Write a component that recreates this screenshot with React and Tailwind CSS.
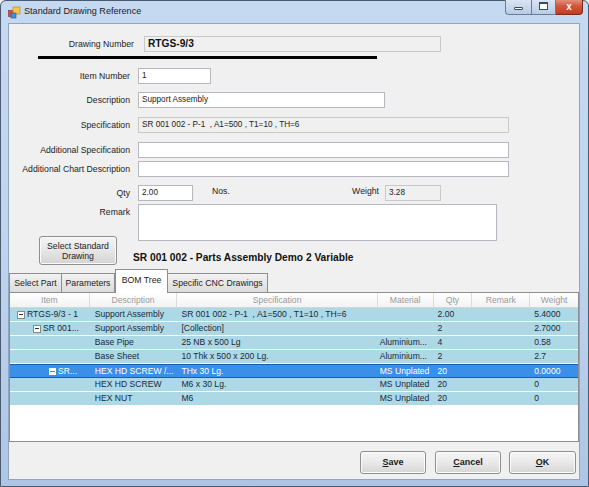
import React from "react";

const rows = [
  { lvl: 0, box: true, item: "RTGS-9/3 - 1", desc: "Support Assembly", spec: "SR 001 002 - P-1  , A1=500 , T1=10 , TH=6", mat: "", qty: "2.00", rem: "", wt: "5.4000" },
  { lvl: 1, box: true, item: "SR 001...", desc: "Support Assembly", spec: "[Collection]", mat: "", qty: "2", rem: "", wt: "2.7000" },
  { lvl: 2, box: false, item: "", desc: "Base Pipe", spec: "25 NB x 500 Lg", mat: "Aluminium...", qty: "4", rem: "", wt: "0.58" },
  { lvl: 2, box: false, item: "", desc: "Base Sheet", spec: "10 Thk x 500 x 200 Lg.", mat: "Aluminium...", qty: "2", rem: "", wt: "2.7" },
  { lvl: 2, box: true, sel: true, item: "SR...", desc: "HEX HD SCREW /...", spec: "THx 30 Lg.", mat: "MS Unplated", qty: "20", rem: "", wt: "0.0000" },
  { lvl: 3, box: false, item: "", desc: "HEX HD SCREW", spec: "M6 x 30 Lg.", mat: "MS Unplated", qty: "20", rem: "", wt: "0" },
  { lvl: 3, box: false, item: "", desc: "HEX NUT", spec: "M6", mat: "MS Unplated", qty: "20", rem: "", wt: "0" },
];

function MinusBox({ sel }) {
  return (
    <span
      className={
        sel
          ? "inline-flex h-[7px] w-[7px] items-center justify-center bg-white"
          : "inline-flex h-[8px] w-[8px] items-center justify-center border border-[#8a8a8a] bg-white"
      }
    >
      <span className={sel ? "h-[1px] w-[5px] bg-[#3a8fe8]" : "h-[1px] w-[4px] bg-[#333]"} />
    </span>
  );
}

function Label({ children, w = "w-[121px]" }) {
  return <div className={`${w} shrink-0 text-right text-[8.7px] leading-none text-[#222]`}>{children}</div>;
}

function TB({ w, h = "h-[16px]", gray, children, bold }) {
  return (
    <div
      className={`${w} ${h} shrink-0 border ${gray ? "border-[#c9c9c9] bg-[#f0f0f0]" : "border-[#b5b8bf] bg-white"} flex items-${h === "h-[16px]" ? "center" : "start"} pl-[3px] ${bold ? "text-[10.2px] font-bold text-[#111]" : "text-[8.2px] text-[#222]"} leading-none`}
    >
      {children}
    </div>
  );
}

function WinButton({ children, w = "w-[66px]" }) {
  return (
    <div className={`${w} h-[23px] shrink-0 rounded-[3px] border border-[#8e8f8f] bg-gradient-to-b from-[#f6f6f6] via-[#e9e9e9] to-[#d6d6d6] flex items-center justify-center text-[9px] font-bold text-[#1a1a1a] shadow-[inset_0_0_0_1px_#fcfcfc]`}>
      {children}
    </div>
  );
}

export default function App() {
  return (
    <div className="w-[589px] h-[487px] overflow-hidden bg-[#f0f0f0] font-['Liberation_Sans',Arial,sans-serif]">
      <div className="relative flex h-[487px] w-[589px] flex-col rounded-t-[6px] border border-[#4a5a70] bg-gradient-to-b from-[#c5d9f1] via-[#bfd4ee] to-[#aec6e4]">
        {/* Title bar */}
        <div className="flex h-[22px] shrink-0 items-center">
          <svg width="13" height="13" viewBox="0 0 13 13" className="ml-[7px]">
            <rect x="0.5" y="4.5" width="6" height="6" fill="#e04a3a" stroke="#8a2a1e" strokeWidth="0.6" />
            <rect x="5" y="1" width="7" height="7" fill="#f6c843" stroke="#a9801c" strokeWidth="0.6" />
            <rect x="3" y="7" width="5" height="5" fill="#4a8de0" stroke="#1f4f8f" strokeWidth="0.6" />
          </svg>
          <div className="ml-[3px] text-[9.1px] text-[#1b1b1b]">Standard Drawing Reference</div>
          <div className="ml-auto mr-[5px] mt-[-4px] flex h-[18px] self-start">
            <div className="flex w-[26px] items-center justify-center rounded-bl-[4px] border border-r-0 border-[#6b7d96] bg-gradient-to-b from-[#dfe9f6] to-[#b8cbe4]">
              <div className="mt-[4px] h-[3px] w-[9px] rounded-[1px] border border-[#3a4a60] bg-white" />
            </div>
            <div className="flex w-[25px] items-center justify-center border border-[#6b7d96] bg-gradient-to-b from-[#dfe9f6] to-[#b8cbe4]">
              <div className="h-[8px] w-[9px] border-[1.5px] border-t-[2.5px] border-[#3a4a60] bg-white" />
            </div>
            <div className="flex w-[27px] items-center justify-center rounded-br-[4px] border border-l-0 border-[#7a2a20] bg-gradient-to-b from-[#e8a08c] via-[#d0573d] to-[#c23a20] text-[10px] font-bold text-white">
              x
            </div>
          </div>
        </div>

        {/* Client area */}
        <div className="mb-[6px] ml-[7px] mr-[8px] flex flex-1 flex-col border border-[#8ea4c0] bg-[#f0f0f0]">
          {/* Drawing number */}
          <div className="mt-[12px] flex items-center">
            <Label w="w-[125px]">Drawing Number</Label>
            <div className="ml-[10px]">
              <TB w="w-[297px]" h="h-[16px]" gray bold>RTGS-9/3</TB>
            </div>
          </div>
          <div className="ml-[29px] mt-[4px] h-[3px] w-[339px] bg-black" />

          <div className="mt-[9px] flex items-center">
            <Label>Item Number</Label>
            <div className="ml-[8px]"><TB w="w-[73px]">1</TB></div>
          </div>
          <div className="mt-[8px] flex items-center">
            <Label>Description</Label>
            <div className="ml-[8px]"><TB w="w-[247px]">Support Assembly</TB></div>
          </div>
          <div className="mt-[9px] flex items-center">
            <Label>Specification</Label>
            <div className="ml-[8px]"><TB w="w-[371px]" gray>SR 001 002 - P-1 &nbsp;, A1=500 , T1=10 , TH=6</TB></div>
          </div>
          <div className="mt-[9px] flex items-center">
            <Label>Additional Specification</Label>
            <div className="ml-[8px]"><TB w="w-[371px]" /></div>
          </div>
          <div className="mt-[3px] flex items-center">
            <Label>Additional Chart Description</Label>
            <div className="ml-[8px]"><TB w="w-[371px]" /></div>
          </div>
          <div className="mt-[8px] flex items-center">
            <Label>Qty</Label>
            <div className="ml-[8px]"><TB w="w-[55px]">2.00</TB></div>
            <div className="flex w-[186px] items-center justify-between pl-[19px] text-[8.7px] leading-none text-[#222]">
              <span className="-mt-[4px]">Nos.</span>
              <span className="-mt-[4px]">Weight</span>
            </div>
            <div className="ml-[6px]"><TB w="w-[56px]" gray>3.28</TB></div>
          </div>
          <div className="mt-[3px] flex items-start">
            <div className="pt-[4px]"><Label>Remark</Label></div>
            <div className="ml-[8px]"><TB w="w-[359px]" h="h-[37px]" /></div>
          </div>

          {/* Select button + title */}
          <div className="-mt-[5px] flex items-end">
            <div className="ml-[30px] flex h-[29px] w-[78px] flex-col items-center justify-center rounded-[3px] border border-[#8e8f8f] bg-gradient-to-b from-[#f4f4f4] via-[#e6e6e6] to-[#d4d4d4] text-[8.7px] leading-[10px] text-[#222] shadow-[inset_0_0_0_1px_#fafafa]">
              <span>Select Standard</span>
              <span>Drawing</span>
            </div>
            <div className="mb-[2px] ml-[16px] text-[10.2px] font-bold leading-none text-[#111]">
              SR 001 002 - Parts Assembly Demo 2 Variable
            </div>
          </div>

          {/* Tabs */}
          <div className="mt-[4px] flex h-[23px] items-end text-[8.7px] leading-none text-[#222]">
            <div className="flex h-[19px] w-[53px] items-center justify-center border border-b-0 border-[#8c8e94] bg-gradient-to-b from-[#f2f2f2] to-[#dcdcdc]">Select Part</div>
            <div className="flex h-[19px] w-[53px] items-center justify-center border border-b-0 border-l-0 border-[#8c8e94] bg-gradient-to-b from-[#f2f2f2] to-[#dcdcdc]">Parameters</div>
            <div className="relative z-10 -mb-[1px] flex h-[24px] w-[53px] items-center justify-center border border-b-0 border-[#8c8e94] bg-white pb-[2px]">BOM Tree</div>
            <div className="flex h-[19px] w-[100px] items-center justify-center border border-b-0 border-l-0 border-[#8c8e94] bg-gradient-to-b from-[#f2f2f2] to-[#dcdcdc]">Specific CNC Drawings</div>
          </div>

          {/* Grid */}
          <div className="h-[150px] shrink-0 border border-[#8c8e94] bg-white text-[8.6px] leading-none text-[#1c2a36]">
            <div className="flex h-[15px] border-b border-[#d5d5d5] bg-gradient-to-b from-white to-[#f3f3f3] text-[#9a9a9a]">
              <div className="flex w-[80px] items-center justify-center border-r border-[#dcdcdc]">Item</div>
              <div className="flex w-[88px] items-center justify-center border-r border-[#dcdcdc]">Description</div>
              <div className="flex w-[201px] items-center justify-center border-r border-[#dcdcdc]">Specification</div>
              <div className="flex w-[56px] items-center justify-center border-r border-[#dcdcdc]">Material</div>
              <div className="flex w-[39px] items-center justify-center border-r border-[#dcdcdc]">Qty</div>
              <div className="flex w-[58px] items-center justify-center border-r border-[#dcdcdc]">Remark</div>
              <div className="flex w-[48px] items-center justify-center">Weight</div>
            </div>
            {rows.map((r, i) => (
              <div
                key={i}
                className={
                  r.sel
                    ? "flex h-[14px] border-y border-[#1e5aa8] bg-[#3a8fe8] text-white"
                    : "flex h-[14px] border-b border-white bg-[#add8e6]"
                }
              >
                <div className="flex w-[80px] items-center whitespace-nowrap">
                  {r.box ? (
                    <div className={r.lvl === 0 ? "flex items-center pl-[7px]" : r.lvl === 1 ? "flex items-center pl-[23px]" : "flex items-center pl-[39px]"}>
                      <MinusBox sel={r.sel} />
                      <span className="ml-[2px]">{r.item}</span>
                    </div>
                  ) : null}
                </div>
                <div className="flex w-[88px] items-center whitespace-nowrap pl-[5px]">{r.desc}</div>
                <div className="flex w-[201px] items-center whitespace-pre pl-[4px]">{r.spec}</div>
                <div className="flex w-[56px] items-center whitespace-nowrap pl-[2px]">{r.mat}</div>
                <div className="flex w-[39px] items-center pl-[4px]">{r.qty}</div>
                <div className="flex w-[58px] items-center">{r.rem}</div>
                <div className="flex w-[48px] items-center pl-[4px]">{r.wt}</div>
              </div>
            ))}
          </div>

          {/* Footer */}
          <div className="flex flex-1 items-start justify-end pr-[3px] pt-[9px]">
            <WinButton><span><span className="underline">S</span>ave</span></WinButton>
            <div className="w-[9px]" />
            <WinButton><span><span className="underline">C</span>ancel</span></WinButton>
            <div className="w-[8px]" />
            <WinButton w="w-[67px]"><span><span className="underline">O</span>K</span></WinButton>
          </div>
        </div>
      </div>
    </div>
  );
}
